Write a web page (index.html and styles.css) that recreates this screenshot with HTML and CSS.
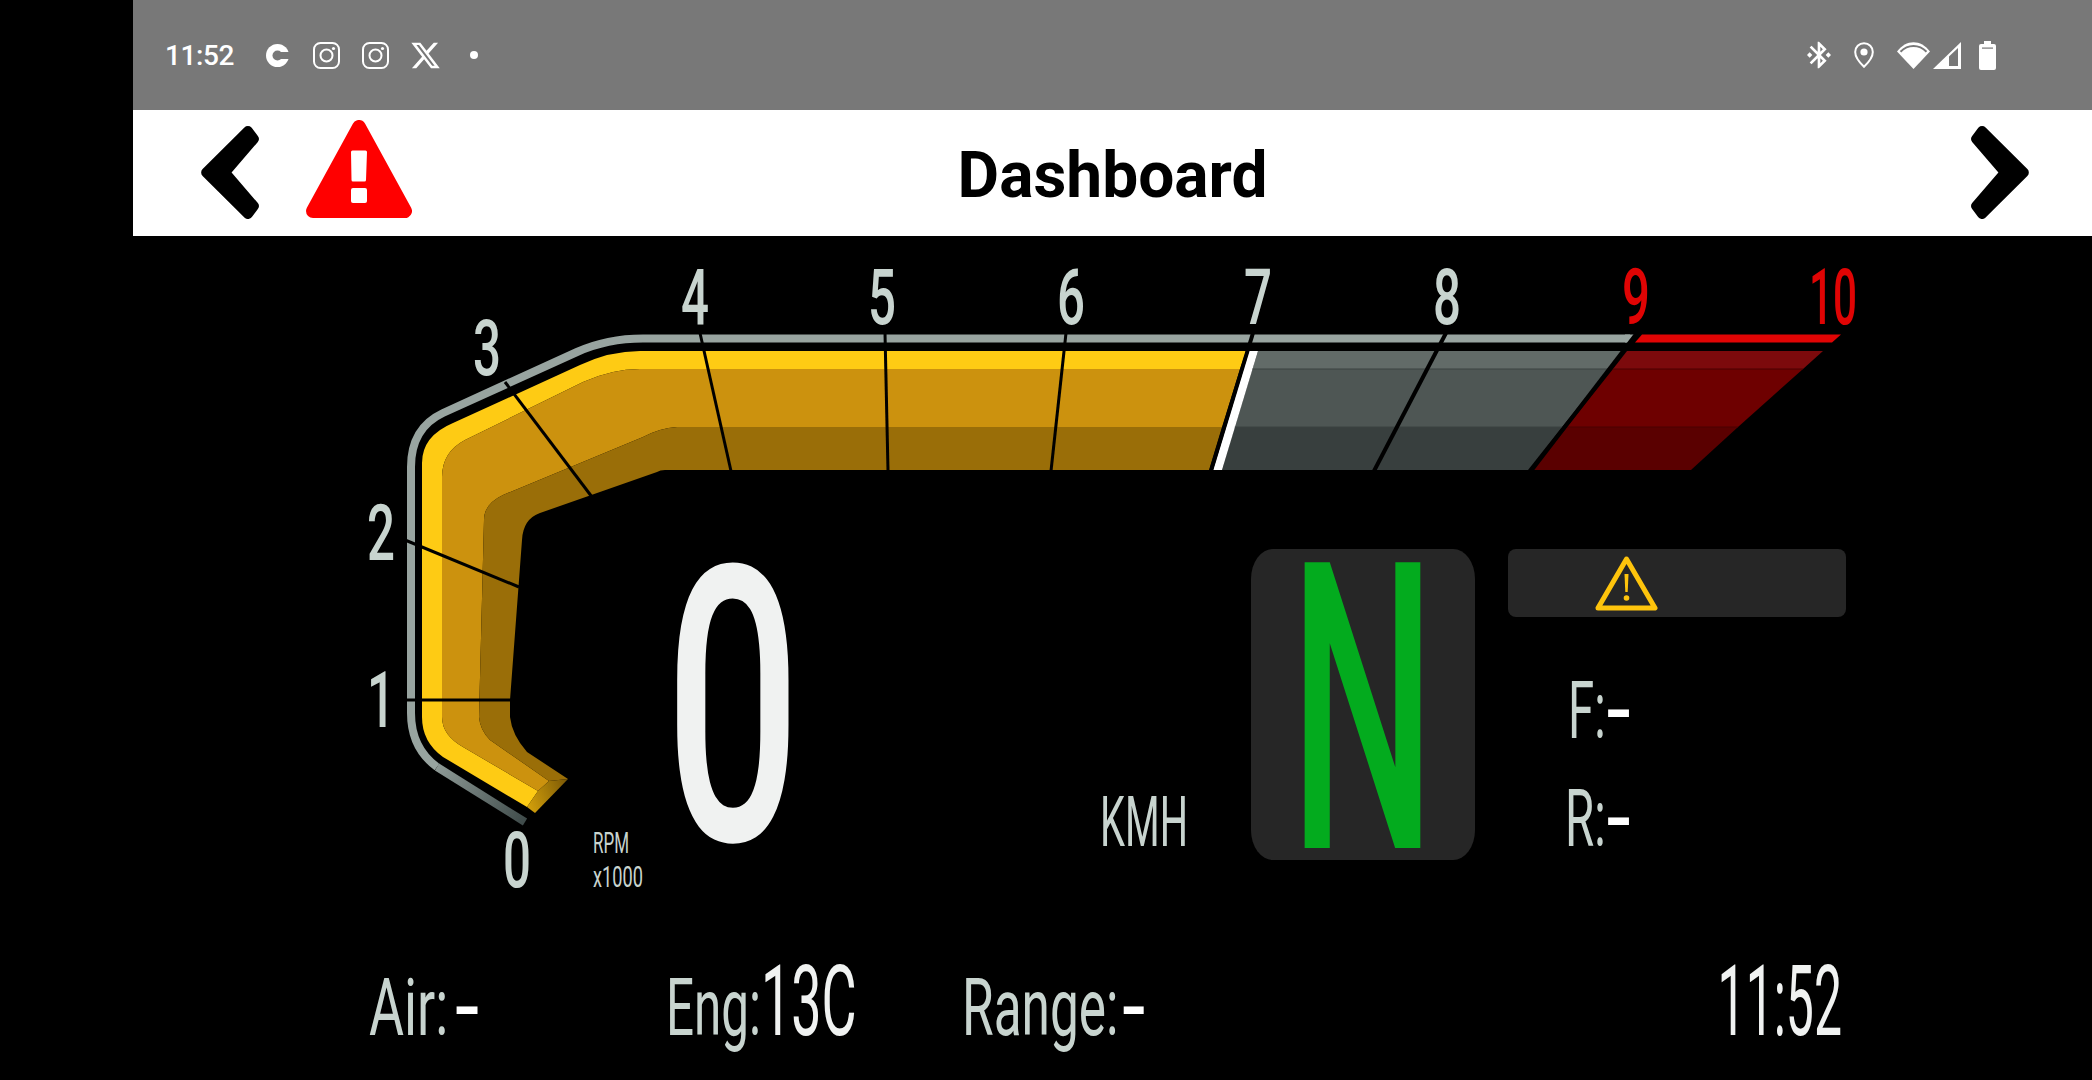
FILE: index.html

```html
<!DOCTYPE html>
<html lang="en">
<head>
    <meta charset="UTF-8">
    <meta name="viewport" content="width=device-width, initial-scale=1.0">
    <title>Dashboard</title>
    <link rel="stylesheet" href="styles.css">
</head>
<body>
    <div class="app">
        <div class="status-bar">
            <span class="status-time">11:52</span>
            <svg class="icon-c" viewBox="0 0 23 23"><circle cx="11.5" cy="11.5" r="11.5" fill="#fff"/><circle cx="11.5" cy="11.5" r="5" fill="#787878"/><rect x="11.5" y="8" width="12" height="7" fill="#787878"/></svg>
            <svg class="icon-insta" viewBox="0 0 27 27"><rect x="1" y="1" width="25" height="25" rx="6.5" fill="none" stroke="#fff" stroke-width="2"/><circle cx="13.5" cy="13.5" r="6" fill="none" stroke="#fff" stroke-width="2"/><circle cx="20.5" cy="6.5" r="1.6" fill="#fff"/></svg>
            <svg class="icon-insta" viewBox="0 0 27 27"><rect x="1" y="1" width="25" height="25" rx="6.5" fill="none" stroke="#fff" stroke-width="2"/><circle cx="13.5" cy="13.5" r="6" fill="none" stroke="#fff" stroke-width="2"/><circle cx="20.5" cy="6.5" r="1.6" fill="#fff"/></svg>
            <svg class="icon-x" viewBox="1 2 22 20"><path fill="#fff" d="M18.244 2.25h3.308l-7.227 8.26 8.502 11.24H16.17l-5.214-6.817L4.99 21.75H1.68l7.73-8.835L1.254 2.25H8.08l4.713 6.231zm-1.161 17.52h1.833L7.084 4.126H5.117z"/></svg>
            <span class="status-dot"></span>
            <div class="status-right">
                <svg class="icon-bt" viewBox="3 2 18 20"><path fill="#fff" d="M7 12l-2-2-2 2 2 2 2-2zm10.71-4.29L12 2h-1v7.59L6.41 5 5 6.41 10.59 12 5 17.59 6.41 19 11 14.41V22h1l5.71-5.71-4.3-4.29 4.3-4.29zM13 5.83l1.88 1.88L13 9.59V5.83zm1.88 10.46L13 18.17v-3.76l1.88 1.88zM19 10l-2 2 2 2 2-2-2-2z"/></svg>
                <svg class="icon-pin" viewBox="0 0 20 26"><path d="M10 1.2C5 1.2 1.2 5.2 1.2 10c0 5 4.6 10.8 8.8 14.8 4.2-4 8.8-9.8 8.8-14.8 0-4.800-3.800-8.800-8.800-8.800z" fill="none" stroke="#fff" stroke-width="2"/><circle cx="10" cy="10" r="3.600" fill="#fff"/></svg>
                <svg class="icon-wifi" viewBox="0 0 33 27"><path d="M0 9.500C9 -3 24 -3 33 9.500L16.500 27z" fill="#fff"/><path d="M3.500 9.700C11 2 22 2 29.500 9.700" fill="none" stroke="#787878" stroke-width="2"/></svg>
                <svg class="icon-signal" viewBox="0 0 28 27"><path d="M0 27L28 0v27z" fill="#fff"/><path d="M16 14.500L25 6v18h-9z" fill="#787878"/></svg>
                <svg class="icon-battery" viewBox="0 0 17 29"><path d="M5 0h7v3h3a2 2 0 0 1 2 2v22a2 2 0 0 1-2 2H2a2 2 0 0 1-2-2V5a2 2 0 0 1 2-2h3z" fill="#fff"/><rect x="3" y="6.500" width="11" height="1.200" fill="#787878"/></svg>
            </div>
        </div>

        <div class="top-bar">
            <div class="top-left">
                <svg class="chevron" viewBox="0 0 58 93.500"><path d="M5 46.700L47 5 53 13 24 46.700 53 80.500 47 88.500z" fill="#000" stroke="#000" stroke-width="10" stroke-linejoin="round"/></svg>
                <svg class="alert" viewBox="0 0 106 98"><path d="M53 7L99 91H7z" fill="#f00" stroke="#f00" stroke-width="14" stroke-linejoin="round"/><path d="M45 32a1.500 1.500 0 0 1 1.500-1.500h13a1.500 1.500 0 0 1 1.500 1.500l-1 28a1.500 1.500 0 0 1-1.500 1.500h-11.500a1.500 1.500 0 0 1-1.500-1.500z" fill="#fff"/><rect x="45" y="68" width="16" height="15" rx="2" fill="#fff"/></svg>
            </div>
            <h1 class="title">Dashboard</h1>
            <div class="top-right">
                <svg class="chevron" viewBox="0 0 58 93.500"><path d="M53 46.700L11 5 5 13 34 46.700 5 80.500 11 88.500z" fill="#000" stroke="#000" stroke-width="10" stroke-linejoin="round"/></svg>
            </div>
        </div>

        <div class="dash">
            <svg class="gauge" viewBox="133 236 1959 844">
                <defs>
                    <linearGradient id="trackEnd" gradientUnits="userSpaceOnUse" x1="430" y1="755" x2="525" y2="822">
                        <stop offset="0" stop-color="#98a4a0"/>
                        <stop offset="1" stop-color="#3f4b4a"/>
                    </linearGradient>
                    <linearGradient id="capFade" gradientUnits="userSpaceOnUse" x1="527" y1="800" x2="568" y2="785">
                        <stop offset="0" stop-color="#d09d0a"/>
                        <stop offset="1" stop-color="#7d5a06"/>
                    </linearGradient>
                </defs>

                <!-- outer track -->
                <path class="track" d="M437 767Q411 748 411 713L411 467Q411 428 443 413L577 352Q607 338.500 643 338.500L1630 338.500"/>
                <path class="track-end" d="M525 822L437 767"/>
                <polygon fill="#98a4a0" points="1625,334.500 1635,334.500 1629,342.500 1625,342.500"/>
                <polygon fill="#e00404" points="1642,334.500 1841,334.500 1832,342.500 1635,342.500"/>

                <!-- lit part of the bar -->
                <path fill="#fecb14" d="M527 807L443 757Q422 742 422 717L422 463Q422 436 453 423L580 365Q610 351 640 351L1246 351L1240 369L640 369Q612 369 583 382L465 440Q442 452 442 477L442 717Q442 735 463 747L538 791Z"/>
                <path fill="#cc920e" d="M538 791L463 747Q442 735 442 717L442 477Q442 452 465 440L583 382Q612 369 640 369L1240 369L1222 427L677 427Q660 428 643 437L503 495Q484 504 484 520L479 717Q480 730 490 740L549 781Z"/>
                <path fill="#9a6e08" d="M549 781L490 740Q480 730 479 717L484 520Q484 504 503 495L643 437Q660 428 677 427L1222 427L1209 470L665 470Q660 470 657 472L540 513Q523 519 522 540L510 700L510 717Q512 735 527 752L568 779Z"/>
                <polygon fill="url(#capFade)" points="527,807 538,791 549,781 568,779 535,813"/>

                <!-- unlit part -->
                <polygon fill="#626b68" points="1258,351 1623,351 1608.600,369 1252.500,369"/>
                <polygon fill="#4e5654" points="1252.500,369 1608.600,369 1562,427 1234.800,427"/>
                <polygon fill="#383f3e" points="1234.800,427 1562,427 1528,470 1222,470"/>
                <polygon fill="#7c0a0c" points="1627,351 1823,351 1803,369 1613,369"/>
                <polygon fill="#6e0000" points="1613,369 1803,369 1738,427 1567,427"/>
                <polygon fill="#5a0000" points="1567,427 1738,427 1691,470 1533,470"/>
                <polygon fill="#fff" points="1249,351 1258,351 1222,470 1213,470"/>
                <path class="seam" d="M1252.500 369H1608.600M1234.800 427H1562"/>
                <path class="seam-red" d="M1613 369H1803M1567 427H1738"/>

                <!-- rpm ticks -->
                <line class="tick" x1="403" y1="700" x2="512" y2="700"/>
                <line class="tick" x1="405" y1="540" x2="519" y2="587"/>
                <line class="tick" x1="505" y1="382" x2="592" y2="497"/>
                <line class="tick" x1="700" y1="333" x2="731" y2="471"/>
                <line class="tick" x1="885" y1="333" x2="888" y2="471"/>
                <line class="tick" x1="1066" y1="333" x2="1051" y2="471"/>
                <line class="tick wide" x1="1253" y1="333" x2="1211" y2="471"/>
                <line class="tick wide" x1="1446" y1="333" x2="1374" y2="471"/>
                <line class="tick wide" x1="1637" y1="333" x2="1531" y2="471"/>

                <text class="rpm-num" x="367" y="560" textLength="28" lengthAdjust="spacingAndGlyphs">2</text>
                <text class="rpm-num" x="473" y="375" textLength="28" lengthAdjust="spacingAndGlyphs">3</text>
                <text class="rpm-num" x="367" y="727" textLength="28" lengthAdjust="spacingAndGlyphs">1</text>
                <text class="rpm-num" x="503" y="887" textLength="28" lengthAdjust="spacingAndGlyphs">0</text>
                <text class="rpm-num" x="681" y="324" textLength="28" lengthAdjust="spacingAndGlyphs">4</text>
                <text class="rpm-num" x="868" y="324" textLength="28" lengthAdjust="spacingAndGlyphs">5</text>
                <text class="rpm-num" x="1057" y="324" textLength="28" lengthAdjust="spacingAndGlyphs">6</text>
                <text class="rpm-num" x="1244" y="324" textLength="28" lengthAdjust="spacingAndGlyphs">7</text>
                <text class="rpm-num" x="1433" y="324" textLength="28" lengthAdjust="spacingAndGlyphs">8</text>
                <text class="rpm-num red" x="1622" y="324" textLength="28" lengthAdjust="spacingAndGlyphs">9</text>
                <text class="rpm-num red" x="1809" y="324" textLength="48" lengthAdjust="spacingAndGlyphs">10</text>
                <text class="rpm-unit" x="593" y="853" textLength="36" lengthAdjust="spacingAndGlyphs">RPM</text>
                <text class="rpm-unit" x="593" y="887" textLength="50" lengthAdjust="spacingAndGlyphs">x1000</text>
            </svg>

            <div class="mid">
                <div class="speed"><span class="speed-val">0</span></div>
                <div class="kmh"><span class="kmh-text">KMH</span></div>
                <div class="gear"><span class="gear-val">N</span></div>
                <div class="side">
                    <div class="warn-box">
                        <svg class="warn-icon" viewBox="0 0 63 56"><path d="M31.500 4L60 53H3z" fill="none" stroke="#fec40c" stroke-width="5" stroke-linejoin="round"/><path d="M29.500 19h4l-.8 18h-2.400z" fill="#fec40c"/><circle cx="31.500" cy="43" r="2.800" fill="#fec40c"/></svg>
                    </div>
                    <div class="pressure"><span class="cond">F:<span class="nil">-</span></span></div>
                    <div class="pressure"><span class="cond">R:<span class="nil">-</span></span></div>
                </div>
            </div>

            <div class="bottom">
                <div class="stat stat-air"><span class="cond">Air:<span class="nil">-</span></span></div>
                <div class="stat stat-eng"><span class="cond">Eng:<span class="big">13C</span></span></div>
                <div class="stat stat-range"><span class="cond">Range:<span class="nil">-</span></span></div>
                <div class="clock"><span class="clock-text">11:52</span></div>
            </div>
        </div>
    </div>
</body>
</html>
```

FILE: styles.css

```css
body {
    margin: 0;
    padding: 0;
    height: 1080px;
    overflow: hidden;
    background-color: #000;
    font-family: Roboto, sans-serif;
}
.app {
    margin-left: 133px;
    width: 1959px;
}

/* android status bar */
.status-bar {
    display: flex;
    align-items: center;
    height: 110px;
    padding-left: 32px;
    box-sizing: border-box;
    background-color: #787878;
}
.status-bar svg {
    display: block;
}
.status-time {
    width: 101px;
    color: #fff;
    font-size: 28px;
    font-weight: 500;
    letter-spacing: -.4px;
}
.icon-c {
    width: 23px;
    height: 23px;
    margin-right: 24px;
}
.icon-insta {
    width: 27px;
    height: 27px;
    margin-right: 22px;
}
.icon-x {
    width: 29px;
    height: 27px;
    margin-right: 30px;
}
.status-dot {
    width: 8px;
    height: 8px;
    border-radius: 50%;
    background-color: #fff;
}
.status-right {
    display: flex;
    align-items: center;
    margin-left: auto;
    padding-right: 96px;
}
.icon-bt {
    width: 24px;
    height: 28px;
    margin-right: 23px;
}
.icon-pin {
    width: 20px;
    height: 26px;
    margin-right: 23px;
}
.icon-wifi {
    width: 33px;
    height: 27px;
    margin-right: 3px;
}
.icon-signal {
    width: 28px;
    height: 27px;
    margin-right: 18px;
}
.icon-battery {
    width: 17px;
    height: 29px;
}

/* white title bar */
.top-bar {
    display: grid;
    grid-template-columns: 1fr auto 1fr;
    align-items: center;
    height: 126px;
    background-color: #fff;
}
.top-left {
    display: flex;
    align-items: center;
    gap: 47px;
    padding-left: 68px;
}
.top-right {
    display: flex;
    justify-content: flex-end;
    padding-right: 63px;
}
.chevron {
    display: block;
    width: 58px;
    height: 93px;
    margin-bottom: 2px;
}
.alert {
    display: block;
    width: 106px;
    height: 98px;
    margin-bottom: 8px;
}
.title {
    margin: 0;
    padding-top: 5px;
    color: #000;
    font-size: 64px;
    font-weight: 700;
}

/* dashboard */
.dash {
    position: relative;
    height: 844px;
}
.gauge {
    position: absolute;
    left: 0;
    top: 0;
    width: 1959px;
    height: 844px;
}
.track {
    fill: none;
    stroke: #98a4a0;
    stroke-width: 8;
}
.track-end {
    fill: none;
    stroke: url(#trackEnd);
    stroke-width: 8;
}
.seam {
    fill: none;
    stroke: #3a4240;
    stroke-width: 1;
}
.seam-red {
    fill: none;
    stroke: #4a0000;
    stroke-width: 1;
}
.tick {
    stroke: #000;
    stroke-width: 3;
}
.tick.wide {
    stroke-width: 4;
}
.rpm-num {
    fill: #c8d4cf;
    font-size: 77px;
    font-weight: 500;
}
.rpm-num.red {
    fill: #e00404;
}
.rpm-unit {
    fill: #c8d4cf;
    font-size: 29px;
}

.mid {
    position: relative;
    display: flex;
    height: 624px;
    padding-left: 540px;
    padding-top: 313px;
    box-sizing: border-box;
}
.speed {
    width: 430px;
    height: 311px;
    padding-top: 9px;
    box-sizing: border-box;
}
.speed-val {
    display: inline-block;
    margin-left: -8px;
    color: #f0f2f1;
    font-size: 385px;
    font-weight: 500;
    line-height: 302px;
    transform: scaleX(.62);
    transform-origin: left;
}
.kmh {
    width: 148px;
    margin-left: -3px;
    margin-right: 3px;
    padding-top: 238px;
    box-sizing: border-box;
    color: #c8d4cf;
    font-size: 71px;
    line-height: 70px;
}
.kmh-text {
    display: inline-block;
    transform: scaleX(.56);
    transform-origin: left;
}
.gear {
    display: flex;
    justify-content: center;
    width: 224px;
    height: 311px;
    border-radius: 22px / 30px;
    background-color: #262626;
}
.gear-val {
    display: block;
    color: #03ab1e;
    font-size: 402px;
    font-weight: 500;
    line-height: 311px;
    padding-top: 6px;
    transform: scaleX(.51);
}
.side {
    width: 338px;
    margin-left: 33px;
}
.warn-box {
    display: flex;
    align-items: center;
    height: 68px;
    padding-left: 87px;
    border-radius: 8px;
    background-color: #262626;
}
.warn-icon {
    display: block;
    width: 63px;
    height: 56px;
}
.pressure {
    width: 119px;
    height: 108px;
    color: #c8d4cf;
    font-size: 79px;
    line-height: 108px;
    text-align: right;
    white-space: nowrap;
}
.warn-box + .pressure {
    margin-top: 40px;
}
.pressure .cond {
    display: inline-block;
    transform: scaleX(.6);
    transform-origin: right;
}
.nil {
    display: inline-block;
    margin-left: 8px;
    color: #fff;
    font-weight: 500;
    transform: scaleX(1.7);
}

.bottom {
    position: relative;
    display: flex;
    align-items: baseline;
    margin-top: 92px;
    padding-left: 236px;
    padding-right: 250px;
    color: #c8d4cf;
    font-size: 79px;
    line-height: 100px;
    white-space: nowrap;
}
.stat .cond {
    display: inline-block;
    transform-origin: left;
}
.stat .nil {
    margin-left: 14px;
    transform: scaleX(1.5);
}
.stat-air {
    width: 297px;
}
.stat-air .cond {
    transform: scaleX(.68);
}
.stat-eng {
    width: 296px;
}
.stat-eng .cond {
    transform: scaleX(.625);
}
.stat-range {
    width: 300px;
}
.stat-range .cond {
    transform: scaleX(.65);
}
.stat-range .nil {
    margin-left: 10px;
}
.big {
    display: inline-block;
    color: #f0f2f1;
    font-size: 98px;
    transform: scaleX(.88);
    transform-origin: left;
}
.clock {
    margin-left: auto;
    color: #f0f2f1;
    font-size: 98px;
}
.clock-text {
    display: inline-block;
    transform: scaleX(.51);
    transform-origin: right;
}
```
